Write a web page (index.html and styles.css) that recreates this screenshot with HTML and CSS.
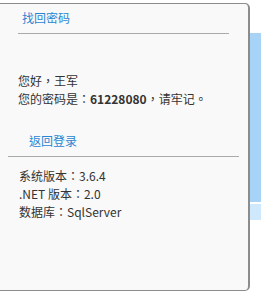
FILE: index.html
```html
<!DOCTYPE html>
<html>
<head>
<meta charset="utf-8">
<link rel="stylesheet" href="styles.css">
</head>
<body>
<div class="page">
  <div class="card">
    <div class="title"><a class="link">找回密码</a></div>
    <div class="rule rule-top"></div>
    <div class="msg">
      <div>您好，王军</div>
      <div>您的密码是：<b>61228080</b>，请牢记。</div>
    </div>
    <div class="back"><a class="link">返回登录</a></div>
    <div class="rule rule-bottom"></div>
    <div class="info">
      <div>系统版本：3.6.4</div>
      <div>.NET 版本：2.0</div>
      <div>数据库：SqlServer</div>
    </div>
  </div>
  <div class="side">
    <div class="side-dark"></div>
    <div class="side-light"></div>
  </div>
</div>
</body>
</html>
```
FILE: styles.css
```css
html, body {
  margin: 0;
  padding: 0;
  background: #ffffff;
}
body {
  font-family: "Noto Sans CJK TC", "Noto Sans CJK SC", "Noto Sans", sans-serif;
  font-size: 12px;
  color: #333333;
}
.page {
  display: flex;
  align-items: flex-start;
}
.card {
  box-sizing: border-box;
  width: 251px;
  height: 288px;
  margin-top: 3px;
  margin-left: -1px;
  flex: none;
  background: #f9f9f9;
  border: 1px solid #8c8c8c;
  border-right: 2px solid #8c8c8c;
  border-radius: 0 5px 5px 0;
}
.link {
  color: #2a86d2;
  text-decoration: none;
}
.title {
  margin-top: 4px;
  padding-left: 22px;
  line-height: 20px;
}
.rule {
  height: 1px;
  background: #aaaaaa;
}
.rule-top {
  margin-top: 5px;
  margin-left: 18px;
  width: 211px;
}
.msg {
  margin-top: 38px;
  padding-left: 18px;
  line-height: 18px;
}
.msg b {
  font-weight: bold;
}
.back {
  margin-top: 23px;
  padding-left: 29px;
  line-height: 20px;
}
.rule-bottom {
  margin-top: 5px;
  margin-left: 8px;
  width: 231px;
}
.info {
  margin-top: 10px;
  padding-left: 19px;
  line-height: 18px;
}
.side {
  flex: 1;
  display: flex;
  flex-direction: column;
  padding-top: 33px;
}
.side-dark {
  height: 169px;
  background: #a6d3f6;
}
.side-light {
  margin-top: 2px;
  height: 16px;
  background: #d0e8fc;
}
```
